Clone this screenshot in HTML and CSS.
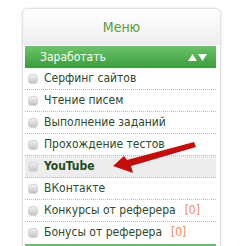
FILE: index.html
```html
<!DOCTYPE html>
<html lang="ru">
<head>
    <meta charset="UTF-8">
    <title>Меню</title>
    <link rel="stylesheet" href="styles.css">
</head>
<body>
    <div class="menu">
        <div class="menu-title">Меню</div>
        <div class="menu-body">
            <div class="section">
                <span>Заработать</span>
                <svg class="toggle" width="20" height="9" viewBox="0 0 20 9">
                    <polygon points="0,8 4.5,1 9,8" fill="#fff"/>
                    <polygon points="10,1 19,1 14.5,8" fill="#fff"/>
                </svg>
            </div>
            <ul class="links">
                <li><i></i>Серфинг сайтов</li>
                <li><i></i>Чтение писем</li>
                <li><i></i>Выполнение заданий</li>
                <li><i></i>Прохождение тестов</li>
                <li class="active"><i></i>YouTube</li>
                <li><i></i>ВКонтакте</li>
                <li><i></i>Конкурсы от реферера <span class="count">[0]</span></li>
                <li><i></i>Бонусы от реферера <span class="count">[0]</span></li>
            </ul>
            <div class="section next"></div>
        </div>
        <svg class="pointer" width="90" height="40" viewBox="0 0 90 40">
            <path d="M3 28 L14 18 L17 22 L84 4 L86 9 L21 28 L23 35 Z" fill="#c40d0d"/>
        </svg>
    </div>
</body>
</html>
```

FILE: styles.css
```css
html, body {
    height: 100%;
    overflow: hidden;
}
body {
    margin: 0;
    padding: 8px 0 0 22px;
    box-sizing: border-box;
    background: #fff;
    font-family: "DejaVu Sans Condensed", "DejaVu Sans", sans-serif;
}
.menu {
    position: relative;
    width: 197px;
    border: 1px solid #e2e2e2;
    border-radius: 6px;
    box-shadow: 0 0 3px rgba(0,0,0,0.12);
    background: #fff;
}
.menu-title {
    height: 36px;
    line-height: 36px;
    text-align: center;
    color: #5c9a3c;
    font-size: 14px;
    background: linear-gradient(#ffffff, #ededed);
    border-radius: 6px 6px 0 0;
}
.menu-body {
    padding: 1px 4px 0 2px;
}
.section {
    height: 22px;
    display: flex;
    align-items: center;
    justify-content: space-between;
    padding: 0 8px 0 15px;
    color: #fff;
    font-size: 12px;
    background: linear-gradient(#6cc46a, #3a9c3c);
}
.section.next {
    margin-top: 1px;
}
.toggle {
    display: block;
}
.links {
    list-style: none;
    margin: 0;
    padding: 0;
}
.links li {
    height: 21px;
    line-height: 21px;
    display: flex;
    align-items: center;
    font-size: 12px;
    color: #2d4a2d;
    border-bottom: 1px dotted #b8b8b8;
    white-space: nowrap;
}
.links li:last-child {
    border-bottom: none;
}
.links li i {
    width: 8px;
    height: 8px;
    border-radius: 3px;
    margin: 0 6px 0 3px;
    background: linear-gradient(#f0f0f0, #c4c4c4);
    border: 1px solid #d6d6d6;
}
.links li.active {
    background: #ededed;
    font-weight: bold;
    color: #1f4a1f;
}
.count {
    color: #ee8a60;
    margin-left: 9px;
}
.pointer {
    position: absolute;
    left: 87px;
    top: 129px;
}
```
